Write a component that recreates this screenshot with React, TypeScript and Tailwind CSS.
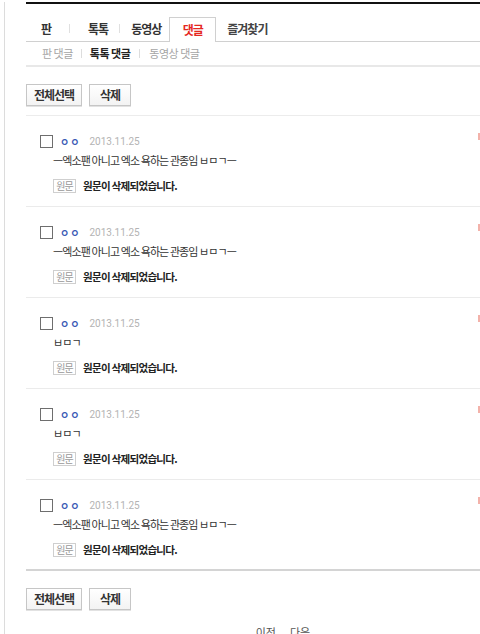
import React from 'react';

const LONG = 'ㅡ엑소팬 아니고 엑소 욕하는 관종임 ㅂㅁㄱㅡ';

const comments = [
  { id: 1, name: 'ㅇㅇ', date: '2013.11.25', text: LONG },
  { id: 2, name: 'ㅇㅇ', date: '2013.11.25', text: LONG },
  { id: 3, name: 'ㅇㅇ', date: '2013.11.25', text: 'ㅂㅁㄱ' },
  { id: 4, name: 'ㅇㅇ', date: '2013.11.25', text: 'ㅂㅁㄱ' },
  { id: 5, name: 'ㅇㅇ', date: '2013.11.25', text: LONG },
];

const ButtonRow: React.FC = () => (
  <div className="flex gap-[7px]">
    <button className="h-[22px] w-[56px] border border-[#c6c6c6] bg-gradient-to-b from-white to-[#f3f3f3] text-[12px] font-bold tracking-[-1px] text-[#333] shadow-[0_1px_0_#e2e2e2]">
      전체선택
    </button>
    <button className="h-[22px] w-[42px] border border-[#c6c6c6] bg-gradient-to-b from-white to-[#f3f3f3] text-[12px] font-bold tracking-[-1px] text-[#333] shadow-[0_1px_0_#e2e2e2]">
      삭제
    </button>
  </div>
);

export default function App() {
  return (
    <div
      className="min-h-[634px] bg-white"
      style={{ fontFamily: '"Noto Sans CJK KR", "Noto Sans", sans-serif' }}
    >
      <div className="ml-[4px] min-h-[634px] border-l border-[#dcdcdc] pl-[21px]">
        <div className="mt-[2px] h-[2px] bg-[#111]" />

        {/* tabs */}
        <div className="mt-[12px] flex h-[26px] items-end border-b border-[#d0d0d0] text-[12px] font-bold tracking-[-1px] text-[#333]">
          <div className="flex h-[24px] items-center pl-[15px]">판</div>
          <div className="mx-[18px] mb-[8px] h-[9px] w-px bg-[#e0e0e0]" />
          <div className="flex h-[24px] items-center">톡톡</div>
          <div className="mx-[11px] mb-[8px] h-[9px] w-px bg-[#e0e0e0]" />
          <div className="flex h-[24px] items-center">동영상</div>
          <div className="mb-[-1px] ml-[8px] flex h-[25px] w-[47px] items-center justify-center border border-b-0 border-[#d0d0d0] bg-white text-[#e5281f]">
            댓글
          </div>
          <div className="flex h-[24px] items-center pl-[11px] text-[#444]">즐겨찾기</div>
        </div>

        {/* sub nav */}
        <div className="flex h-[25px] items-center border-b-2 border-[#e8e8e8] pl-[16px] text-[11px] tracking-[-0.5px] text-[#a5a5a5]">
          <span>판 댓글</span>
          <span className="mx-[8px] h-[9px] w-px bg-[#ddd]" />
          <span className="font-bold text-[#222]">톡톡 댓글</span>
          <span className="mx-[9px] h-[9px] w-px bg-[#ddd]" />
          <span>동영상 댓글</span>
        </div>

        <div className="pt-[17px] pb-[9px]">
          <ButtonRow />
        </div>

        {/* comment list */}
        <ul className="border-t border-[#ececec]">
          {comments.map((c, i) => (
            <li
              key={c.id}
              className={`relative h-[91px] pl-[14px] pt-[18px] ${
                i === comments.length - 1 ? 'border-b-2 border-[#d4d4d4]' : 'border-b border-[#ebebeb]'
              }`}
            >
              <div className="flex items-center">
                <span className="h-[13px] w-[13px] border-[1.5px] border-[#6e6e6e] bg-white" />
                <span className="ml-[7px] text-[10px] font-bold tracking-[1px] text-[#3b5bb5]">{c.name}</span>
                <span
                  className="ml-[9px] text-[10px] text-[#b3b3b3]"
                  style={{ fontFamily: 'Roboto, "Noto Sans", sans-serif' }}
                >
                  {c.date}
                </span>
              </div>
              <p className="mt-[3px] pl-[13px] text-[11px] leading-[16px] tracking-[-0.9px] text-[#333]">{c.text}</p>
              <div className="mt-[10px] flex items-center pl-[13px]">
                <span className="flex h-[14px] w-[23px] items-center justify-center border border-[#cfcfcf] text-[10px] tracking-[-1px] text-[#999]">
                  원문
                </span>
                <span className="ml-[7px] text-[10.5px] font-bold tracking-[-0.7px] text-[#222]">
                  원문이 삭제되었습니다.
                </span>
              </div>
              <span className="absolute right-0 top-[17px] h-[7px] w-[2px] bg-[#f3b2aa]" />
            </li>
          ))}
        </ul>

        <div className="pt-[17px]">
          <ButtonRow />
        </div>

        <div className="mt-[14px] flex justify-center gap-[14px] pl-[60px] text-[11px] text-[#555]">
          <span>이전</span>
          <span>다음</span>
        </div>
      </div>
    </div>
  );
}
